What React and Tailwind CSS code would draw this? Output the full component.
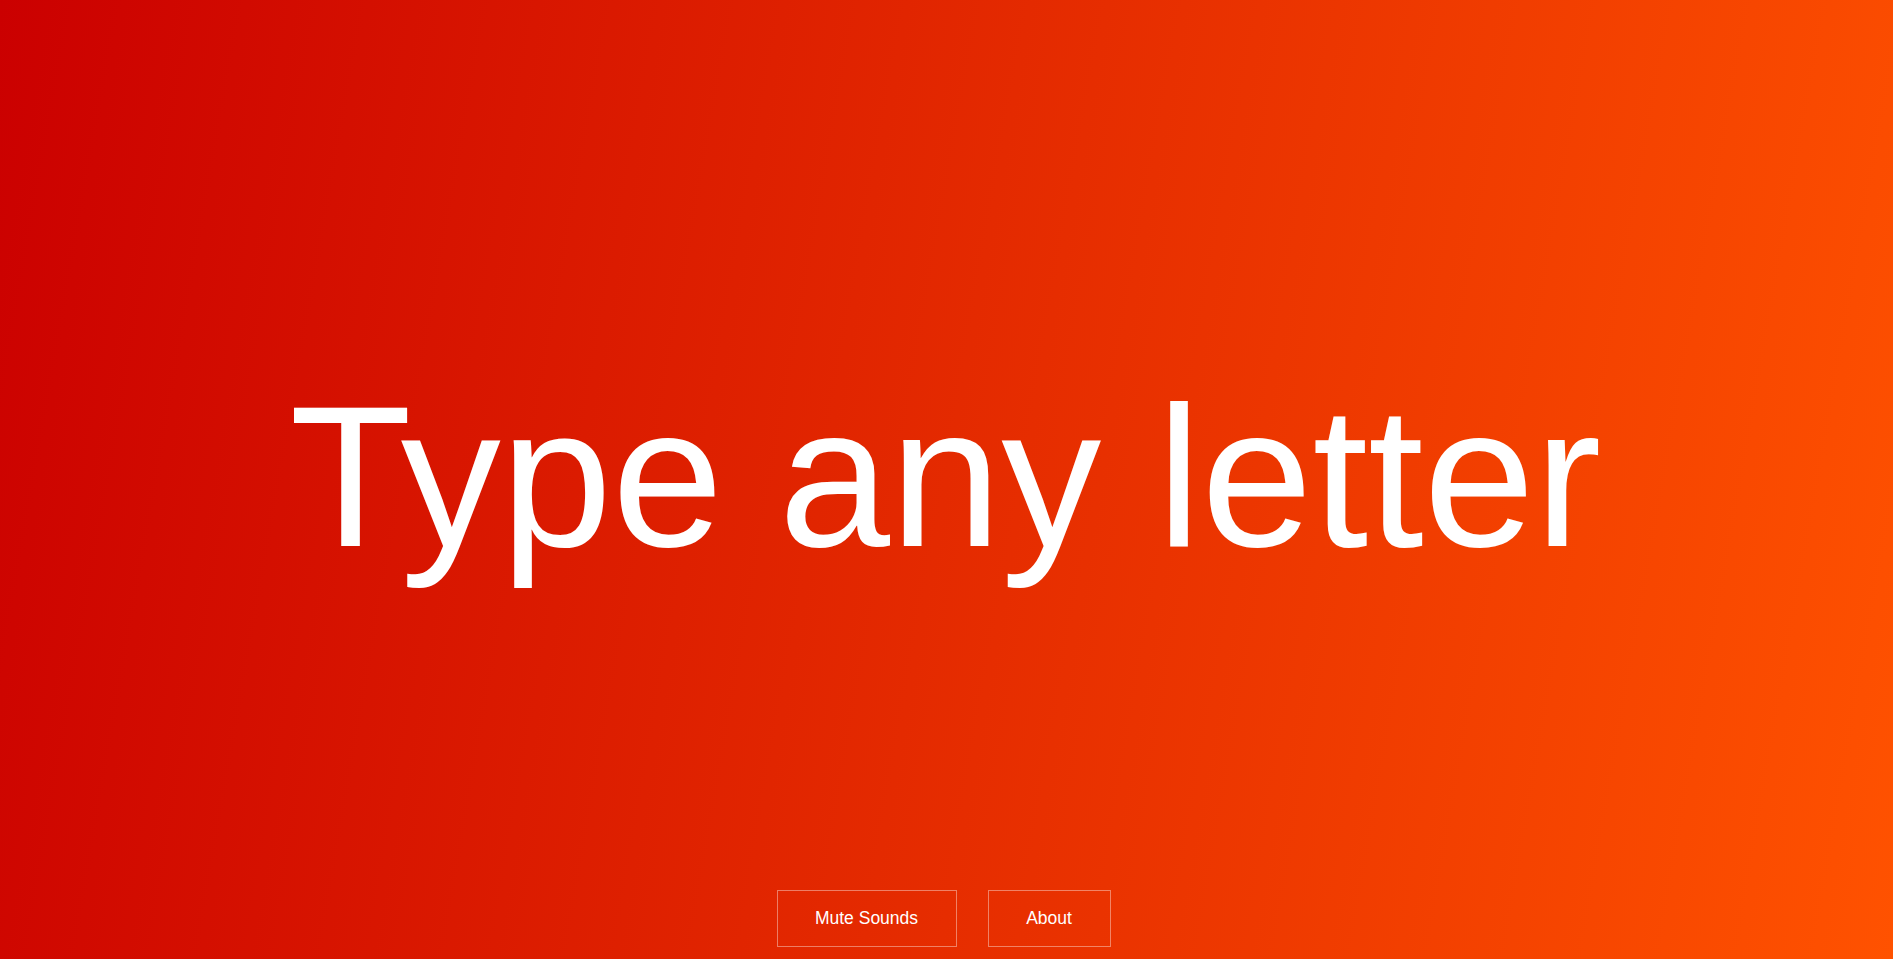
import React, { useState } from 'react';

export default function App() {
  const [muted, setMuted] = useState(false);

  return (
    <div className="h-screen w-full overflow-hidden bg-[linear-gradient(100deg,#cb0000_0%,#e42a00_50%,#ff5200_100%)] font-['Liberation_Sans',Arial,sans-serif] text-white grid grid-rows-[1fr_auto_1fr]">
      <div />
      <h1 className="text-[200px] leading-none font-normal text-center whitespace-nowrap select-none pb-[5px] pr-[2px]">
        Type any letter
      </h1>
      <div className="flex items-end justify-center gap-[31px] pb-[12px] pr-[6px]">
        <button
          onClick={() => setMuted(!muted)}
          className="h-[57px] w-[180px] border border-white/40 text-[17.5px] text-white hover:bg-white/10 transition-colors"
        >
          {muted ? 'Unmute Sounds' : 'Mute Sounds'}
        </button>
        <button className="h-[57px] w-[123px] border border-white/40 text-[17.5px] text-white hover:bg-white/10 transition-colors">
          About
        </button>
      </div>
    </div>
  );
}
